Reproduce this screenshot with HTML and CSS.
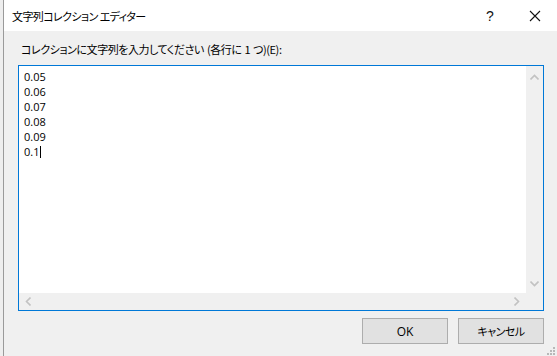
FILE: index.html
```html
<!DOCTYPE html>
<html lang="ja">
<head>
<meta charset="utf-8">
<title>文字列コレクション エディター</title>
<link rel="stylesheet" href="styles.css">
</head>
<body>
<div class="backdrop"></div>
<div class="dialog">
	<div class="titlebar">
		<span class="title">文字列コレクション エディター</span>
		<span class="tb-btn help">?</span>
		<span class="tb-btn close">
			<svg width="12" height="12" viewBox="0 0 12 12"><path d="M1 1L11 11M11 1L1 11" stroke="#111" stroke-width="1.1" fill="none"/></svg>
		</span>
	</div>
	<div class="content">
		<div class="prompt">コレクションに文字列を入力してください (各行に 1 つ)(E):</div>
		<div class="editbox">
			<div class="edit-area">
				<div class="lines">
					<div>0.05</div>
					<div>0.06</div>
					<div>0.07</div>
					<div>0.08</div>
					<div>0.09</div>
					<div>0.1<span class="caret"></span></div>
				</div>
				<div class="vscroll">
					<svg width="9" height="6" viewBox="0 0 9 6"><path d="M0.5 5.5L4.5 1.5L8.5 5.5" stroke="#c2c2c2" stroke-width="1.6" fill="none"/></svg>
					<svg width="9" height="6" viewBox="0 0 9 6"><path d="M0.5 0.5L4.5 4.5L8.5 0.5" stroke="#c2c2c2" stroke-width="1.6" fill="none"/></svg>
				</div>
			</div>
			<div class="hscroll-row">
				<div class="hscroll">
					<svg width="6" height="9" viewBox="0 0 6 9"><path d="M5.5 0.5L1.5 4.5L5.5 8.5" stroke="#c2c2c2" stroke-width="1.6" fill="none"/></svg>
					<svg width="6" height="9" viewBox="0 0 6 9"><path d="M0.5 0.5L4.5 4.5L0.5 8.5" stroke="#c2c2c2" stroke-width="1.6" fill="none"/></svg>
				</div>
				<div class="corner"></div>
			</div>
		</div>
		<div class="buttons">
			<button class="btn">OK</button>
			<button class="btn jp">キャンセル</button>
		</div>
	</div>
	<div class="grip">
		<svg width="8" height="8" viewBox="0 0 8 8" fill="#b8b8b8"><rect x="6" y="0" width="2" height="2"/><rect x="3" y="3" width="2" height="2"/><rect x="6" y="3" width="2" height="2"/><rect x="0" y="6" width="2" height="2"/><rect x="3" y="6" width="2" height="2"/><rect x="6" y="6" width="2" height="2"/></svg>
	</div>
</div>
</body>
</html>
```

FILE: styles.css
```css
html, body {
	margin: 0;
	height: 100%;
	overflow: hidden;
}
body {
	display: flex;
	background: #f0f0f0;
	font-family: "Open Sans", "Noto Sans CJK JP", sans-serif;
	font-size: 12px;
	color: #000;
}
.backdrop {
	width: 3px;
	background: #eeeeee;
}
.dialog {
	flex: 1;
	display: flex;
	flex-direction: column;
	position: relative;
	border-left: 1px solid #9a9a9a;
	background: #f0f0f0;
}
.titlebar {
	height: 31px;
	background: #fff;
	display: flex;
	align-items: center;
	padding-left: 8px;
}
.title {
	flex: 1;
	font-family: "Noto Sans CJK JP", sans-serif;
	font-feature-settings: "palt";
	font-size: 11px;
	letter-spacing: -0.6px;
	padding-top: 1px;
}
.tb-btn {
	height: 31px;
	display: flex;
	align-items: center;
	justify-content: center;
}
.help {
	width: 46px;
	font-family: "Liberation Sans", sans-serif;
	font-size: 14px;
	color: #111;
}
.close {
	width: 44px;
}
.content {
	padding: 10px 0 0 14px;
	width: 526px;
}
.prompt {
	padding-left: 3px;
	height: 24px;
	line-height: 16px;
	font-family: "Noto Sans CJK JP", sans-serif;
	font-feature-settings: "palt";
	font-size: 11px;
	letter-spacing: -0.45px;
	word-spacing: 1px;
}
.editbox {
	border: 1px solid #0078d7;
	height: 244px;
	background: #fff;
	display: flex;
	flex-direction: column;
}
.edit-area {
	flex: 1;
	display: flex;
}
.lines {
	flex: 1;
	padding: 3px 0 0 5px;
	line-height: 15px;
	font-size: 11px;
}
.caret {
	display: inline-block;
	width: 1px;
	height: 12px;
	background: #000;
	vertical-align: -2px;
	margin-left: 1px;
}
.vscroll {
	width: 17px;
	background: #f0f0f0;
	display: flex;
	flex-direction: column;
	justify-content: space-between;
	align-items: center;
	padding: 8px 0 6px;
}
.hscroll-row {
	height: 17px;
	display: flex;
}
.hscroll {
	flex: 1;
	background: #f0f0f0;
	display: flex;
	justify-content: space-between;
	align-items: center;
	padding: 0 6px 0 6px;
}
.corner {
	width: 17px;
	background: #f0f0f0;
}
.buttons {
	display: flex;
	justify-content: flex-end;
	gap: 10px;
	margin-top: 7px;
}
.btn {
	width: 86px;
	height: 26px;
	margin: 0;
	padding: 0;
	background: #e1e1e1;
	border: 1px solid #adadad;
	font-family: "Open Sans", "Noto Sans CJK JP", sans-serif;
	font-size: 12px;
	color: #000;
}
.btn.jp {
	font-family: "Noto Sans CJK JP", sans-serif;
	font-feature-settings: "palt";
	font-size: 11px;
	letter-spacing: -0.5px;
}
.grip {
	position: absolute;
	right: 2px;
	bottom: 1px;
	line-height: 0;
}
```
